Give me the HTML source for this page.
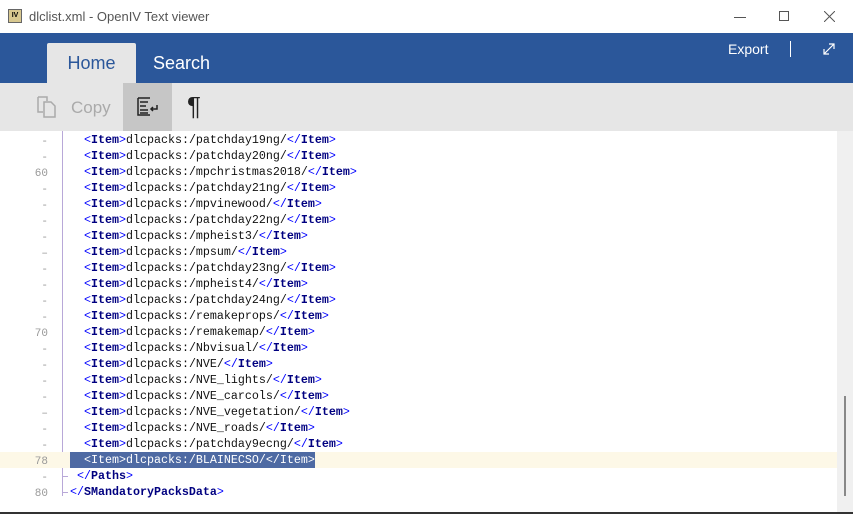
<!DOCTYPE html><html><head><style>
*{margin:0;padding:0;box-sizing:border-box}
body{width:853px;height:514px;overflow:hidden;background:#fff;font-family:"Liberation Sans",sans-serif;position:relative}
.title{position:absolute;top:0;left:0;width:853px;height:33px;background:#fff}
.title .t{position:absolute;left:29px;top:9px;font-size:13px;color:#555}
.ribbon{position:absolute;top:33px;left:0;width:853px;height:50px;background:#2b579a}
.tab{position:absolute;top:10px;height:40px;font-size:18px;line-height:40px;text-align:center}
.tool{position:absolute;top:83px;left:0;width:853px;height:48px;background:#e6e6e6}
.ed{position:absolute;top:131px;left:0;width:837px;height:381px;background:#fff}
.ln{position:absolute;left:0;width:48px;text-align:right;font:11px "Liberation Mono",monospace;color:#999}
.code{position:absolute;font:11.67px/16px "Liberation Mono",monospace;color:#111;white-space:pre}
.b{color:#0000ff}.n{color:#000080;font-weight:bold}
.sb{position:absolute;left:837px;top:131px;width:16px;height:381px;background:#f0f0f0}
</style></head><body>
<div class="title">
<div style="position:absolute;left:8px;top:9px;width:14px;height:14px;background:#d8c890;border:1px solid #666;font:bold 7px sans-serif;line-height:12px;text-align:center">IV</div>
<div class="t">dlclist.xml - OpenIV Text viewer</div>
<div style="position:absolute;left:734px;top:17px;width:12px;height:1px;background:#555"></div>
<div style="position:absolute;left:779px;top:11px;width:10px;height:10px;border:1px solid #555"></div>
<svg style="position:absolute;left:824px;top:11px" width="11" height="11"><path d="M0 0L11 11M11 0L0 11" stroke="#555" stroke-width="1"/></svg>
</div>
<div class="ribbon">
<div class="tab" style="left:47px;width:89px;background:#e6e6e6;color:#2b579a;border-radius:2px 2px 0 0">Home</div>
<div class="tab" style="left:144px;width:75px;color:#fff">Search</div>
<div style="position:absolute;left:728px;top:8px;color:#fff;font-size:14px">Export</div>
<div style="position:absolute;left:790px;top:8px;width:1px;height:16px;background:#fff"></div>
<svg style="position:absolute;left:823px;top:10px" width="12" height="12"><path d="M1 11L11 1M6 1h5v5M1 6v5h5" fill="none" stroke="#fff" stroke-width="1.2"/></svg>
</div>
<div class="tool">
<svg style="position:absolute;left:37px;top:13px" width="20" height="22"><path d="M1 1h9v4M1 1v15h5" fill="none" stroke="#aaa" stroke-width="1.5"/><path d="M7 6h7l4 4v11H7z" fill="none" stroke="#aaa" stroke-width="1.5"/></svg>
<div style="position:absolute;left:71px;top:15px;font-size:17px;color:#aaa">Copy</div>
<div style="position:absolute;left:123px;top:0;width:49px;height:48px;background:#c6c6c6"></div>
<svg style="position:absolute;left:137px;top:14px" width="22" height="20"><path d="M1 1h12M1 1v17h12M3 5h8M3 9h6M3 13h8M3 16h8" fill="none" stroke="#222" stroke-width="1.5"/><path d="M20 8v4h-6M16 10l-2 2 2 2" fill="none" stroke="#222" stroke-width="1.5"/></svg>
<div style="position:absolute;left:187px;top:8px;font-size:26px;color:#222">¶</div>
</div>
<div class="ed">
<div style="position:absolute;left:62px;top:0;width:1px;height:365px;background:#b8a8d8"></div>
<div style="position:absolute;left:62px;top:345px;width:6px;height:1px;background:#b8a8d8"></div>
<div style="position:absolute;left:62px;top:361px;width:6px;height:1px;background:#b8a8d8"></div>
<div style="position:absolute;left:0;top:321px;width:837px;height:16px;background:#fdf8e7"></div>
<div style="position:absolute;left:70px;top:321px;width:245px;height:16px;background:#4e6aa3"></div>
<div class="code" style="left:84px;top:1px"><span class="b">&lt;</span><span class="n">Item</span><span class="b">&gt;</span>dlcpacks:/patchday19ng/<span class="b">&lt;/</span><span class="n">Item</span><span class="b">&gt;</span>
<span class="b">&lt;</span><span class="n">Item</span><span class="b">&gt;</span>dlcpacks:/patchday20ng/<span class="b">&lt;/</span><span class="n">Item</span><span class="b">&gt;</span>
<span class="b">&lt;</span><span class="n">Item</span><span class="b">&gt;</span>dlcpacks:/mpchristmas2018/<span class="b">&lt;/</span><span class="n">Item</span><span class="b">&gt;</span>
<span class="b">&lt;</span><span class="n">Item</span><span class="b">&gt;</span>dlcpacks:/patchday21ng/<span class="b">&lt;/</span><span class="n">Item</span><span class="b">&gt;</span>
<span class="b">&lt;</span><span class="n">Item</span><span class="b">&gt;</span>dlcpacks:/mpvinewood/<span class="b">&lt;/</span><span class="n">Item</span><span class="b">&gt;</span>
<span class="b">&lt;</span><span class="n">Item</span><span class="b">&gt;</span>dlcpacks:/patchday22ng/<span class="b">&lt;/</span><span class="n">Item</span><span class="b">&gt;</span>
<span class="b">&lt;</span><span class="n">Item</span><span class="b">&gt;</span>dlcpacks:/mpheist3/<span class="b">&lt;/</span><span class="n">Item</span><span class="b">&gt;</span>
<span class="b">&lt;</span><span class="n">Item</span><span class="b">&gt;</span>dlcpacks:/mpsum/<span class="b">&lt;/</span><span class="n">Item</span><span class="b">&gt;</span>
<span class="b">&lt;</span><span class="n">Item</span><span class="b">&gt;</span>dlcpacks:/patchday23ng/<span class="b">&lt;/</span><span class="n">Item</span><span class="b">&gt;</span>
<span class="b">&lt;</span><span class="n">Item</span><span class="b">&gt;</span>dlcpacks:/mpheist4/<span class="b">&lt;/</span><span class="n">Item</span><span class="b">&gt;</span>
<span class="b">&lt;</span><span class="n">Item</span><span class="b">&gt;</span>dlcpacks:/patchday24ng/<span class="b">&lt;/</span><span class="n">Item</span><span class="b">&gt;</span>
<span class="b">&lt;</span><span class="n">Item</span><span class="b">&gt;</span>dlcpacks:/remakeprops/<span class="b">&lt;/</span><span class="n">Item</span><span class="b">&gt;</span>
<span class="b">&lt;</span><span class="n">Item</span><span class="b">&gt;</span>dlcpacks:/remakemap/<span class="b">&lt;/</span><span class="n">Item</span><span class="b">&gt;</span>
<span class="b">&lt;</span><span class="n">Item</span><span class="b">&gt;</span>dlcpacks:/Nbvisual/<span class="b">&lt;/</span><span class="n">Item</span><span class="b">&gt;</span>
<span class="b">&lt;</span><span class="n">Item</span><span class="b">&gt;</span>dlcpacks:/NVE/<span class="b">&lt;/</span><span class="n">Item</span><span class="b">&gt;</span>
<span class="b">&lt;</span><span class="n">Item</span><span class="b">&gt;</span>dlcpacks:/NVE_lights/<span class="b">&lt;/</span><span class="n">Item</span><span class="b">&gt;</span>
<span class="b">&lt;</span><span class="n">Item</span><span class="b">&gt;</span>dlcpacks:/NVE_carcols/<span class="b">&lt;/</span><span class="n">Item</span><span class="b">&gt;</span>
<span class="b">&lt;</span><span class="n">Item</span><span class="b">&gt;</span>dlcpacks:/NVE_vegetation/<span class="b">&lt;/</span><span class="n">Item</span><span class="b">&gt;</span>
<span class="b">&lt;</span><span class="n">Item</span><span class="b">&gt;</span>dlcpacks:/NVE_roads/<span class="b">&lt;/</span><span class="n">Item</span><span class="b">&gt;</span>
<span class="b">&lt;</span><span class="n">Item</span><span class="b">&gt;</span>dlcpacks:/patchday9ecng/<span class="b">&lt;/</span><span class="n">Item</span><span class="b">&gt;</span>
<span style="color:#fff">&lt;Item&gt;dlcpacks:/BLAINECSO/&lt;/Item&gt;</span></div>
<div class="code" style="left:77px;top:337px"><span class="b">&lt;/</span><span class="n">Paths</span><span class="b">&gt;</span></div>
<div class="code" style="left:70px;top:353px"><span class="b">&lt;/</span><span class="n">SMandatoryPacksData</span><span class="b">&gt;</span></div>
<div class="ln" style="top:3px;line-height:16px">-<br>-<br>60<br>-<br>-<br>-<br>-<br>–<br>-<br>-<br>-<br>-<br>70<br>-<br>-<br>-<br>-<br>–<br>-<br>-<br>78<br>-<br>80</div>
</div>
<div class="sb"><div style="position:absolute;left:7px;top:265px;width:2px;height:100px;background:#888"></div></div>
<div style="position:absolute;left:0;top:512px;width:853px;height:2px;background:#333"></div>
</body></html>
